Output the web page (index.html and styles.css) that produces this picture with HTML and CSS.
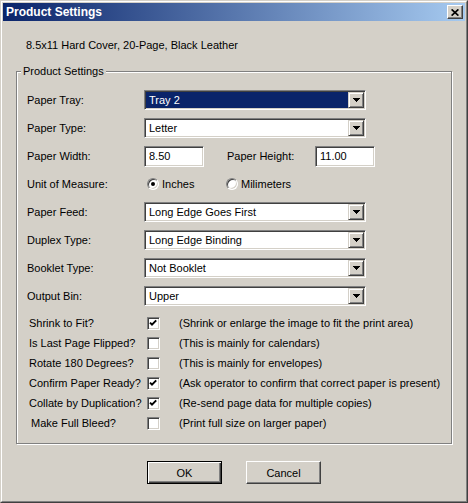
FILE: index.html
```html
<!DOCTYPE html>
<html>
<head>
<meta charset="utf-8">
<title>Product Settings</title>
<link rel="stylesheet" href="styles.css">
</head>
<body>
<div class="window">
  <div class="frame">
    <div class="titlebar">
      <span class="title">Product Settings</span>
      <span class="close">
        <svg width="8" height="7" viewBox="0 0 8 7"><path d="M0.6 0.4L7.4 6.6M7.4 0.4L0.6 6.6" stroke="#000" stroke-width="1.7" fill="none"/></svg>
      </span>
    </div>
    <div class="content">
      <div class="subtitle">8.5x11 Hard Cover, 20-Page, Black Leather</div>
      <fieldset class="group">
        <legend>Product Settings</legend>
        <div class="group-body">
          <div class="form">
            <div class="label">Paper Tray:</div>
            <div class="select focused"><span class="value">Tray 2</span><span class="arrow"><svg width="7" height="4" viewBox="0 0 7 4"><path d="M0 0h7v1h-1v1h-1v1h-1v1h-1v-1h-1v-1h-1v-1h-1z"/></svg></span></div>

            <div class="label">Paper Type:</div>
            <div class="select"><span class="value">Letter</span><span class="arrow"><svg width="7" height="4" viewBox="0 0 7 4"><path d="M0 0h7v1h-1v1h-1v1h-1v1h-1v-1h-1v-1h-1v-1h-1z"/></svg></span></div>

            <div class="label">Paper Width:</div>
            <div class="pair">
              <div class="input">8.50</div>
              <span class="pair-label">Paper Height:</span>
              <div class="input">11.00</div>
            </div>

            <div class="label">Unit of Measure:</div>
            <div class="radios">
              <span class="opt"><span class="radio on"></span>Inches</span>
              <span class="opt"><span class="radio"></span>Milimeters</span>
            </div>

            <div class="label">Paper Feed:</div>
            <div class="select"><span class="value">Long Edge Goes First</span><span class="arrow"><svg width="7" height="4" viewBox="0 0 7 4"><path d="M0 0h7v1h-1v1h-1v1h-1v1h-1v-1h-1v-1h-1v-1h-1z"/></svg></span></div>

            <div class="label">Duplex Type:</div>
            <div class="select"><span class="value">Long Edge Binding</span><span class="arrow"><svg width="7" height="4" viewBox="0 0 7 4"><path d="M0 0h7v1h-1v1h-1v1h-1v1h-1v-1h-1v-1h-1v-1h-1z"/></svg></span></div>

            <div class="label">Booklet Type:</div>
            <div class="select"><span class="value">Not Booklet</span><span class="arrow"><svg width="7" height="4" viewBox="0 0 7 4"><path d="M0 0h7v1h-1v1h-1v1h-1v1h-1v-1h-1v-1h-1v-1h-1z"/></svg></span></div>

            <div class="label">Output Bin:</div>
            <div class="select"><span class="value">Upper</span><span class="arrow"><svg width="7" height="4" viewBox="0 0 7 4"><path d="M0 0h7v1h-1v1h-1v1h-1v1h-1v-1h-1v-1h-1v-1h-1z"/></svg></span></div>
          </div>

          <div class="checks">
            <div class="clabel">Shrink to Fit?</div>
            <span class="check"><svg width="9" height="9" viewBox="0 0 9 9"><polyline points="1,3.6 3,5.6 7.2,1.4" fill="none" stroke="#000" stroke-width="2"/></svg></span>
            <div class="desc">(Shrink or enlarge the image to fit the print area)</div>

            <div class="clabel">Is Last Page Flipped?</div>
            <span class="check"></span>
            <div class="desc">(This is mainly for calendars)</div>

            <div class="clabel">Rotate 180 Degrees?</div>
            <span class="check"></span>
            <div class="desc">(This is mainly for envelopes)</div>

            <div class="clabel">Confirm Paper Ready?</div>
            <span class="check"><svg width="9" height="9" viewBox="0 0 9 9"><polyline points="1,3.6 3,5.6 7.2,1.4" fill="none" stroke="#000" stroke-width="2"/></svg></span>
            <div class="desc">(Ask operator to confirm that correct paper is present)</div>

            <div class="clabel">Collate by Duplication?</div>
            <span class="check"><svg width="9" height="9" viewBox="0 0 9 9"><polyline points="1,3.6 3,5.6 7.2,1.4" fill="none" stroke="#000" stroke-width="2"/></svg></span>
            <div class="desc">(Re-send page data for multiple copies)</div>

            <div class="clabel indent">Make Full Bleed?</div>
            <span class="check"></span>
            <div class="desc">(Print full size on larger paper)</div>
          </div>
        </div>
      </fieldset>
      <div class="buttons">
        <button class="btn default">OK</button>
        <button class="btn">Cancel</button>
      </div>
    </div>
  </div>
</div>
</body>
</html>
```
FILE: styles.css
```css
* { box-sizing: border-box; }
html, body { margin: 0; padding: 0; }
body {
  width: 468px;
  height: 503px;
  background: #d4d0c8;
  font-family: "Liberation Sans", Arial, sans-serif;
  font-size: 11px;
  color: #000;
  overflow: hidden;
}
.window {
  width: 468px;
  height: 503px;
  border: 1px solid;
  border-color: #d4d0c8 #404040 #404040 #d4d0c8;
}
.frame {
  height: 100%;
  border: 1px solid;
  border-color: #fff #808080 #808080 #fff;
  padding: 1px;
}
.titlebar {
  height: 18px;
  display: flex;
  align-items: center;
  justify-content: space-between;
  padding-left: 3px;
  background: linear-gradient(to right, #0a246a, #a6caf0);
}
.title {
  color: #fff;
  font-weight: bold;
  font-size: 12px;
}
.close {
  width: 16px;
  height: 14px;
  margin-right: 2px;
  background: #d4d0c8;
  border: 1px solid;
  border-color: #fff #404040 #404040 #fff;
  box-shadow: inset -1px -1px 0 #808080;
  display: flex;
  align-items: center;
  justify-content: center;
  padding-right: 1px;
}
.close svg { display: block; }
.content {
  padding: 17px 13px 0;
}
.subtitle {
  line-height: 14px;
  padding-left: 10px;
}
.group {
  margin: 12px 0 0;
  padding: 0;
  border: 1px solid #808080;
  box-shadow: inset 1px 1px 0 #fff, 1px 1px 0 #fff;
  min-width: 0;
}
.group legend {
  margin-left: 4px;
  padding: 0 2px;
  line-height: 14px;
  background: #d4d0c8;
}
.group-body {
  padding: 8px 0 10px 10px;
}
.form {
  display: grid;
  grid-template-columns: 117px 1fr;
  grid-auto-rows: 28px;
  align-items: center;
}
.select {
  width: 222px;
  height: 20px;
  display: flex;
  background: #fff;
  border: 1px solid;
  border-color: #808080 #fff #fff #808080;
  box-shadow: inset 1px 1px 0 #404040, inset -1px -1px 0 #d4d0c8;
  padding: 1px;
}
.select .value {
  flex: 1;
  line-height: 16px;
  padding-left: 3px;
}
.select.focused .value {
  background: #0a246a;
  color: #fff;
}
.arrow {
  width: 16px;
  height: 16px;
  background: #d4d0c8;
  border: 1px solid;
  border-color: #d4d0c8 #404040 #404040 #d4d0c8;
  box-shadow: inset 1px 1px 0 #fff, inset -1px -1px 0 #808080;
  display: flex;
  align-items: center;
  justify-content: center;
}
.arrow svg { display: block; }
.pair {
  display: flex;
  align-items: center;
}
.input {
  width: 60px;
  height: 21px;
  background: #fff;
  border: 1px solid;
  border-color: #808080 #fff #fff #808080;
  box-shadow: inset 1px 1px 0 #404040, inset -1px -1px 0 #d4d0c8;
  padding-left: 4px;
  line-height: 19px;
}
.pair-label {
  width: 111px;
  padding-left: 23px;
}
.radios {
  display: flex;
  align-items: center;
  padding-left: 3px;
}
.opt {
  width: 79px;
  display: flex;
  align-items: center;
  gap: 3px;
}
.radio {
  position: relative;
  width: 12px;
  height: 12px;
  border-radius: 50%;
  background: #fff;
  border: 1px solid;
  border-color: #808080 #fff #fff #808080;
  box-shadow: inset 1px 1px 0 #404040, inset -1px -1px 0 #d4d0c8;
}
.radio.on::after {
  content: "";
  position: absolute;
  left: 3px;
  top: 3px;
  width: 4px;
  height: 4px;
  border-radius: 50%;
  background: #000;
}
.checks {
  display: grid;
  grid-template-columns: 118px 32px 1fr;
  grid-auto-rows: 20px;
  align-items: center;
  margin-top: 3px;
  padding-left: 2px;
}
.clabel.indent { padding-left: 2px; }
.check {
  width: 13px;
  height: 13px;
  background: #fff;
  border: 1px solid;
  border-color: #808080 #fff #fff #808080;
  box-shadow: inset 1px 1px 0 #404040, inset -1px -1px 0 #d4d0c8;
  padding: 1px;
}
.check svg { display: block; }
.buttons {
  display: flex;
  justify-content: center;
  gap: 24px;
  margin-top: 17px;
}
.btn {
  width: 75px;
  height: 23px;
  padding: 0;
  font-family: "Liberation Sans", Arial, sans-serif;
  font-size: 11px;
  color: #000;
  background: #d4d0c8;
  border: 1px solid;
  border-color: #fff #404040 #404040 #fff;
  box-shadow: inset -1px -1px 0 #808080;
  border-radius: 0;
}
.btn.default {
  border: 1px solid #000;
  box-shadow: inset 1px 1px 0 #fff, inset -1px -1px 0 #404040, inset -2px -2px 0 #808080;
}
```
